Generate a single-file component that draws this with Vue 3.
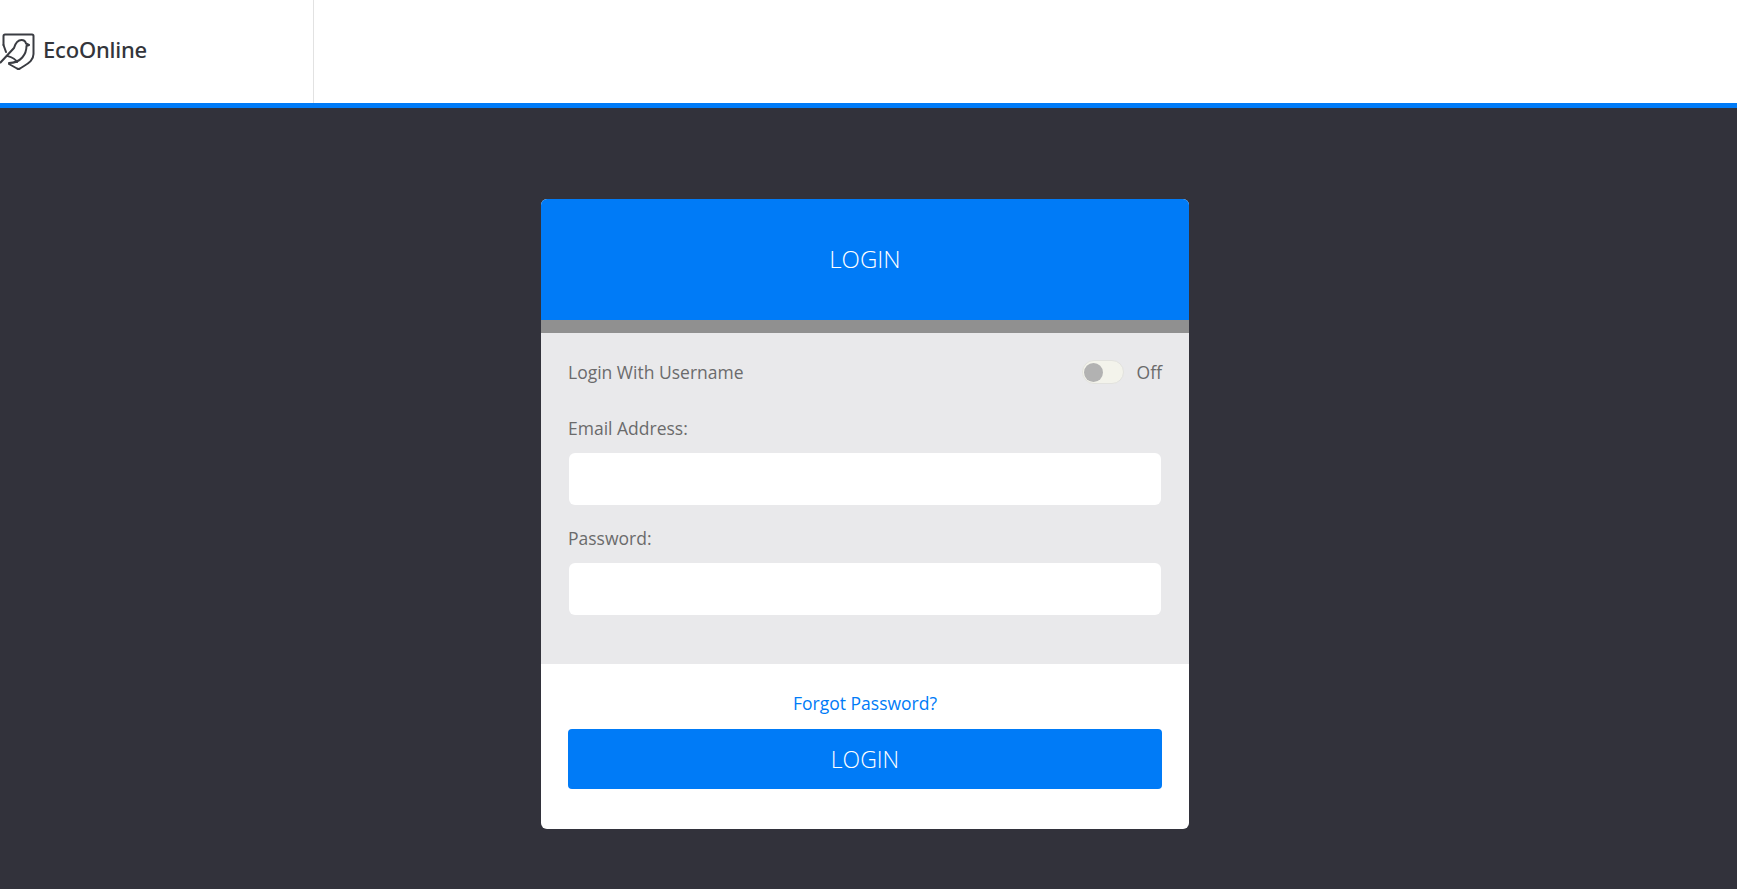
<template>
  <div class="page">
    <header class="topbar">
      <div class="brand">
        <svg class="logo" width="36" height="37" viewBox="0 0 36 37" fill="none" stroke="#3a3c42" stroke-width="2" stroke-linecap="round" stroke-linejoin="round">
          <path d="M3.5 12V3Q3.5 1.5 5 1.5H32Q33.5 1.5 33.5 3V21C33.5 27 29 30 24 33L20 35.5Q18.5 36.3 17 35.5L9 31" />
          <path d="M3.5 12L6 19" />
          <path d="M0.5 29.5L14 15C15.5 10 18 7 21.5 7C24 7 25.5 8.5 26 10.5L29 12L26.5 13C26.5 21 21 30 9 30" />
          <path d="M7.5 23C11 24 15 25 17 29" />
        </svg>
        <span class="brand-name">EcoOnline</span>
      </div>
    </header>
    <main class="content">
      <section class="card">
        <div class="card-head">LOGIN</div>
        <div class="card-body">
          <div class="switch-row">
            <span>Login With Username</span>
            <div class="switch-wrap">
              <span class="switch"><span class="knob"></span></span>
              <span>Off</span>
            </div>
          </div>
          <label class="field">
            <span>Email Address:</span>
            <input type="text" />
          </label>
          <label class="field">
            <span>Password:</span>
            <input type="password" />
          </label>
        </div>
        <div class="card-foot">
          <a class="forgot" href="#">Forgot Password?</a>
          <button class="submit" type="button">LOGIN</button>
        </div>
      </section>
    </main>
  </div>
</template>

<script setup>
</script>

<style>
html, body {
  margin: 0;
  background: #32323b;
}
</style>

<style scoped>
.page {
  min-height: 889px;
  background: #32323b;
  font-family: "Open Sans", "Noto Sans", sans-serif;
  color: #6b6b6b;
  font-size: 17.5px;
}
.topbar {
  height: 103px;
  background: #fff;
  border-bottom: 5px solid #007bf7;
}
.brand {
  width: 314px;
  height: 103px;
  padding-bottom: 6px;
  border-right: 1px solid #e2e2e2;
  display: flex;
  align-items: center;
  gap: 7px;
  box-sizing: border-box;
}
.logo {
  flex: none;
  margin-top: 5px;
}
.brand-name {
  font-family: "Noto Sans", sans-serif;
  font-weight: 500;
  font-size: 22px;
  color: #33353b;
  letter-spacing: -0.2px;
}
.content {
  padding: 91px 0 0 541px;
}
.card {
  width: 648px;
  border-radius: 6px;
  overflow: hidden;
  background: #fff;
}
.card-head {
  height: 119px;
  padding-bottom: 2px;
  background: #007bf7;
  border-bottom: 13px solid #909090;
  display: flex;
  align-items: center;
  justify-content: center;
  color: #fff;
  font-size: 24px;
  font-weight: 300;
}
.card-body {
  background: #e9e9eb;
  padding: 27px 27px 0 27px;
  height: 331px;
  box-sizing: border-box;
}
.switch-row {
  display: flex;
  align-items: center;
  justify-content: space-between;
  height: 24px;
  margin-bottom: 32px;
}
.switch-wrap {
  display: flex;
  align-items: center;
  gap: 13px;
}
.switch {
  display: flex;
  align-items: center;
  width: 38px;
  height: 20px;
  padding: 1px;
  border: 1px solid #e2e2de;
  border-radius: 12px;
  background: #f3f3eb;
}
.knob {
  width: 19px;
  height: 19px;
  border-radius: 50%;
  background: #b2b2b2;
}
.field {
  display: block;
  margin-bottom: 21px;
}
.field span {
  display: block;
  line-height: 24px;
  margin-bottom: 13px;
}
.field input {
  display: block;
  width: 592px;
  height: 52px;
  margin-left: 1px;
  box-sizing: border-box;
  border: 0;
  border-radius: 6px;
  background: #fff;
  outline: none;
}
.card-foot {
  height: 165px;
  padding: 27px 27px 0 27px;
  box-sizing: border-box;
  text-align: center;
}
.forgot {
  display: block;
  line-height: 24px;
  color: #007bf7;
  text-decoration: none;
  margin-bottom: 14px;
  font-size: 17.5px;
}
.submit {
  display: block;
  width: 100%;
  height: 60px;
  border: 0;
  border-radius: 4px;
  background: #007bf7;
  color: #fff;
  font-family: inherit;
  font-size: 23px;
  font-weight: 300;
}
</style>
